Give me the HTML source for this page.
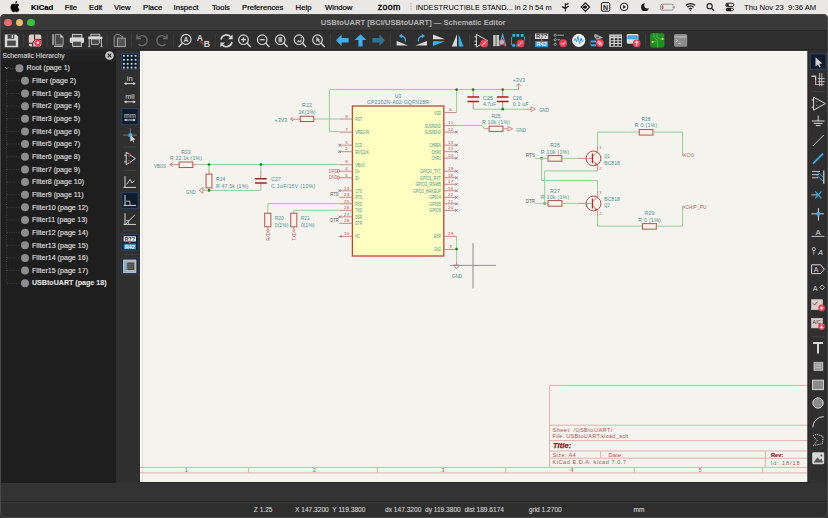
<!DOCTYPE html>
<html><head><meta charset="utf-8">
<style>
*{margin:0;padding:0;box-sizing:border-box}
html,body{width:828px;height:518px;overflow:hidden;background:linear-gradient(#e9e8e5 0,#e9e8e5 20px,#000 20px);font-family:"Liberation Sans",sans-serif;position:relative}
.a{position:absolute}
#menubar{left:0;top:0;width:828px;height:14px;background:#e9e8e5;color:#000;font-size:7.7px;-webkit-text-stroke:0.2px #000}
#menubar span{position:absolute;top:3.5px;line-height:8px;white-space:nowrap}
#winbg{left:0;top:14px;width:828px;height:504px;background:#333333;border-radius:5px}
#frame{left:0;top:14px;width:828px;height:504px;border:1px solid #4a4a4a;border-top-color:#444;border-radius:5px;pointer-events:none}
#cbot{left:140px;top:482px;width:668px;height:1px;background:#272727}
#title{left:0;top:14px;width:828px;height:15.5px;background:#393939;border-radius:5px 5px 0 0}
#tline{left:0;top:29.5px;width:828px;height:1.5px;background:#262626}
#tb{left:0;top:31px;width:828px;height:17.5px;background:#2f2f2f}
#tbl2{left:0;top:48.5px;width:828px;height:1.5px;background:#272727}
#panel{left:0;top:50px;width:116px;height:433px;background:#1e1e1e}
#phead{left:0;top:50px;width:116px;height:11px;background:#232323}
#ltb{left:116px;top:50px;width:24px;height:433px;background:#2f2f2f}
#canvas{left:140px;top:51px;width:668px;height:431px;background:#f4f3ee;border-left:1.5px solid #fbfbf9;border-top:1.5px solid #fbfbf9}
#cline{left:141.5px;top:52.5px;width:1px;height:429px;background:#e4e3de}
#rtb{left:808px;top:50px;width:20px;height:433px;background:#2f2f2f}
#sline{left:0;top:501px;width:828px;height:1px;background:#252525}
#status{left:0;top:502px;width:828px;height:16px;background:#2e2e2e;color:#d6d6d6;font-size:6.6px;-webkit-text-stroke:0.1px #d6d6d6;border-top:1px solid #363636}
#status span{position:absolute;top:3.4px;line-height:8px;white-space:nowrap}
.tl{width:7.5px;height:7.5px;border-radius:50%;top:18.6px}
#tree div{position:absolute;white-space:nowrap;color:#e2e2e2;font-size:7.1px;line-height:8px;-webkit-text-stroke:0.1px #e2e2e2}
</style></head><body>
<div id="menubar" class="a">
<svg class="a" style="left:0;top:0" width="828" height="14" viewBox="0 0 828 14"><path d="M17.2,7.4c0,-1.5 1.2,-2.2 1.3,-2.3c-0.7,-1 -1.8,-1.2 -2.2,-1.2c-0.9,-0.1 -1.8,0.5 -2.3,0.5c-0.5,0 -1.2,-0.5 -2,-0.5c-1,0 -2,0.6 -2.5,1.5c-1.1,1.9 -0.3,4.6 0.8,6.1c0.5,0.7 1.1,1.6 1.9,1.5c0.8,0 1.1,-0.5 2,-0.5c0.9,0 1.2,0.5 2,0.5c0.8,0 1.3,-0.8 1.8,-1.5c0.6,-0.8 0.8,-1.6 0.8,-1.7c0,0 -1.6,-0.6 -1.6,-2.4zM15.7,2.9c0.4,-0.5 0.7,-1.2 0.6,-1.9c-0.6,0 -1.3,0.4 -1.7,0.9c-0.4,0.4 -0.7,1.1 -0.6,1.8c0.7,0.1 1.3,-0.3 1.7,-0.8z" fill="#0a0a0a" transform="translate(2.2,0.2) scale(0.92)"/><path d="M411,3V11" stroke="#9a9a9a" stroke-width="1" stroke-dasharray="0.8 0.8"/><path d="M565.4,3.2V11.6M562,6.6L565.4,8.4L568.6,6M566.4,4.6L568.4,3.2" fill="none" stroke="#1c1c1c" stroke-width="1.3"/><path d="M585.4,2.8L589.6,7.1L585.4,11.4L581.2,7.1Z" fill="none" stroke="#1c1c1c" stroke-width="1.2"/><path d="M582.4,7.1L585.2,5.2L587.2,6.2L586.2,8.8L583.6,8.6Z" fill="#1c1c1c"/><rect x="601.4" y="2.6" width="8.4" height="8.6" rx="1.6" fill="none" stroke="#1c1c1c" stroke-width="1"/><text x="605.6" y="9.6" font-size="7" font-weight="bold" fill="#1c1c1c" text-anchor="middle">N</text><circle cx="624.1" cy="6.9" r="3.8" fill="none" stroke="#1c1c1c" stroke-width="1"/><path d="M623.1,5V8.8L626,6.9Z" fill="#1c1c1c"/><circle cx="645" cy="7.2" r="3.9" fill="#1c1c1c"/><circle cx="647.6" cy="5.2" r="3.3" fill="#e9e8e5"/><rect x="660.6" y="4.2" width="12.6" height="6" rx="1.6" fill="none" stroke="#8a8a8a" stroke-width="0.9"/><rect x="673.8" y="6.2" width="1" height="2" fill="#8a8a8a"/><rect x="661.8" y="5.3" width="1.6" height="3.8" fill="#e0466a"/><path d="M685.8,5.4A7,7 0 0 1 695.2,5.4M687.4,7.2A4.6,4.6 0 0 1 693.6,7.2M689,9A2.2,2.2 0 0 1 692,9" fill="none" stroke="#1c1c1c" stroke-width="1.2"/><circle cx="690.5" cy="10.4" r="0.8" fill="#1c1c1c"/><circle cx="709.6" cy="6.2" r="2.6" fill="none" stroke="#1c1c1c" stroke-width="1.1"/><path d="M711.5,8.1L714,10.6" stroke="#1c1c1c" stroke-width="1.2"/><rect x="725.8" y="3.2" width="8" height="3.4" rx="1.7" fill="none" stroke="#1c1c1c" stroke-width="1"/><circle cx="727.6" cy="4.9" r="1.3" fill="#1c1c1c"/><rect x="725.8" y="7.8" width="8" height="3.4" rx="1.7" fill="#1c1c1c"/><circle cx="732" cy="9.5" r="1.1" fill="#e9e8e5"/></svg>
<span style="left:31px;font-weight:bold">KiCad</span>
<span style="left:64.7px">File</span>
<span style="left:89px">Edit</span>
<span style="left:114px">View</span>
<span style="left:143px">Place</span>
<span style="left:173.6px">Inspect</span>
<span style="left:212px">Tools</span>
<span style="left:242px">Preferences</span>
<span style="left:295.6px">Help</span>
<span style="left:325px">Window</span>
<span style="left:377.8px;font-size:8.8px;top:2.6px;letter-spacing:0.3px;-webkit-text-stroke:0.3px #000">zoom</span>
<span style="left:415.8px;font-size:7.45px;-webkit-text-stroke:0 #000">INDESTRUCTIBLE STAND... in 2 h 54 m</span>
<span style="left:744px;-webkit-text-stroke:0 #000">Thu Nov 23&nbsp; 9:36 AM</span>
</div>
<div id="winbg" class="a"></div>
<div id="title" class="a"></div>
<div class="a tl" style="left:4.3px;background:#ee6a72"></div>
<div class="a tl" style="left:15.6px;background:#e8bf6c"></div>
<div class="a tl" style="left:27.2px;background:#3fc03c"></div>
<div class="a" style="left:320.8px;top:18.8px;font-size:7.6px;line-height:8px;font-weight:bold;color:#b4b4b4;white-space:nowrap">USBtoUART [BCI/USBtoUART] — Schematic Editor</div>
<div id="tline" class="a"></div>
<div id="tb" class="a"></div>
<div id="tbl2" class="a"></div>
<svg class="a" style="left:0;top:31px" width="828" height="19" viewBox="0 31 828 19" font-family="Liberation Sans, sans-serif"><rect x="22.9" y="34" width="1" height="13" fill="#3d3d3d"/>
<rect x="46.6" y="34" width="1" height="13" fill="#3d3d3d"/>
<rect x="106.5" y="34" width="1" height="13" fill="#3d3d3d"/>
<rect x="130.8" y="34" width="1" height="13" fill="#3d3d3d"/>
<rect x="172.8" y="34" width="1" height="13" fill="#3d3d3d"/>
<rect x="214.7" y="34" width="1" height="13" fill="#3d3d3d"/>
<rect x="330.1" y="34" width="1" height="13" fill="#3d3d3d"/>
<rect x="390.0" y="34" width="1" height="13" fill="#3d3d3d"/>
<rect x="469.1" y="34" width="1" height="13" fill="#3d3d3d"/>
<rect x="529.3" y="34" width="1" height="13" fill="#3d3d3d"/>
<rect x="645.0" y="34" width="1" height="13" fill="#3d3d3d"/>
<rect x="668.7" y="34" width="1" height="13" fill="#3d3d3d"/>
<path d="M4.8,34.4H16L18.2,36.6V47.2H4.8Z" fill="#d6d6d6"/>
<rect x="7.6" y="34.6" width="6.6" height="4.2" fill="#4a4a4a"/><rect x="11.6" y="35.2" width="1.4" height="2.8" fill="#d6d6d6"/>
<rect x="7.2" y="40.6" width="8.6" height="5.2" fill="#4a4a4a"/>
<rect x="28.8" y="34.4" width="12.5" height="12.2" rx="2" fill="#e3cbc8"/>
<path d="M34.6,34.4V39.6Q34.6,41 33.4,41.6Q32.4,42.4 32.8,46.6M28.8,43.2H32.6M35.4,39.4H41.3" fill="none" stroke="#1a1a1a" stroke-width="1"/>
<circle cx="37.9" cy="42.8" r="3.1" fill="#e8405a" stroke="#e8405a" stroke-width="1.4" stroke-dasharray="1.3 1.1"/><circle cx="37.9" cy="42.8" r="1.2" fill="#dff0ea"/>
<rect x="52.1" y="34.2" width="2" height="10.8" fill="#9a9a9a"/>
<path d="M55.3,34.4H60.6L63.2,37V44.8H55.3Z" fill="#4a4a4a" stroke="#a6a6a6" stroke-width="0.9"/>
<path d="M60.4,34.4L63.4,37.4H60.4Z" fill="#d8d8d8"/>
<rect x="54" y="45.7" width="9.2" height="1.3" fill="#b8b8b8"/>
<rect x="72.4" y="34.4" width="9.4" height="3.6" fill="#4a4a4a" stroke="#d6d6d6" stroke-width="0.9"/>
<rect x="69.8" y="37.4" width="14.2" height="5.6" rx="1.2" fill="#d6d6d6"/>
<path d="M72.6,41.2H81.4V46.4H72.6Z" fill="#4a4a4a" stroke="#d6d6d6" stroke-width="0.9"/>
<rect x="90.8" y="34.2" width="9" height="2.6" fill="#4a4a4a" stroke="#d6d6d6" stroke-width="0.8"/>
<rect x="88.2" y="36.6" width="14.2" height="2.4" fill="#d6d6d6"/>
<path d="M91.4,39H99.4V43.2L98,44.4H91.4Z" fill="#4a4a4a" stroke="#d6d6d6" stroke-width="0.8"/>
<path d="M89.2,39V46.4M101.4,39V46.4M88.2,46.6h2M100.4,46.6h2" stroke="#c0c0c0" stroke-width="1"/>
<path d="M114.2,36.2L116.2,34.4H119.4L121.2,36.2H122.6V46.6H114.2Z" fill="#3c3c3c" stroke="#9a9a9a" stroke-width="0.9"/>
<rect x="117.6" y="38.2" width="7.8" height="8.4" fill="#555" stroke="#a8a8a8" stroke-width="0.9"/>
<path d="M138.2,37.6A5,5 0 1 1 138.6,44.2" fill="none" stroke="#6e6e6e" stroke-width="1.3" transform="rotate(0)"/>
<path d="M137,34.6V38.6H141" fill="none" stroke="#6e6e6e" stroke-width="1.3"/>
<path d="M165.8,37.6A5,5 0 1 0 165.4,44.2" fill="none" stroke="#6e6e6e" stroke-width="1.3"/>
<path d="M167,34.6V38.6H163" fill="none" stroke="#6e6e6e" stroke-width="1.3"/>
<circle cx="186" cy="39.4" r="5" fill="none" stroke="#d6d6d6" stroke-width="1.2"/>
<path d="M182.4,43.2L178.6,47" stroke="#d6d6d6" stroke-width="1.4"/>
<text x="186" y="42" font-size="7" font-weight="bold" fill="#d6d6d6" text-anchor="middle">A</text>
<text x="199.8" y="40.6" font-size="8.6" font-weight="bold" fill="#d6d6d6" text-anchor="middle">A</text>
<text x="206.9" y="46.8" font-size="8.6" font-weight="bold" fill="#d6d6d6" text-anchor="middle">B</text>
<path d="M200,41.4L203.2,43.6" stroke="#e8405a" stroke-width="1.1"/><path d="M203.8,44.2l-2.4,0.1l1.3,-2z" fill="#e8405a"/>
<path d="M221,39.5A5.6,5.6 0 0 1 231,37.2" fill="none" stroke="#d6d6d6" stroke-width="1.6"/>
<path d="M232.6,34.4V39.2H228Z" fill="#d6d6d6"/>
<path d="M232,42A5.6,5.6 0 0 1 222,44.4" fill="none" stroke="#d6d6d6" stroke-width="1.6"/>
<path d="M220.4,47.2V42.4H225Z" fill="#d6d6d6"/>
<circle cx="243.5" cy="39.7" r="4.8" fill="none" stroke="#d6d6d6" stroke-width="1.2"/>
<path d="M246.9,43.1L250.7,46.9" stroke="#d6d6d6" stroke-width="1.4"/>
<path d="M241,39.7h5M243.5,37.2v5" stroke="#d6d6d6" stroke-width="1.3"/>
<circle cx="262.2" cy="39.7" r="4.8" fill="none" stroke="#d6d6d6" stroke-width="1.2"/>
<path d="M265.59999999999997,43.1L269.4,46.9" stroke="#d6d6d6" stroke-width="1.4"/>
<path d="M259.7,39.7h5" stroke="#d6d6d6" stroke-width="1.3"/>
<circle cx="280.3" cy="39.7" r="4.8" fill="none" stroke="#d6d6d6" stroke-width="1.2"/>
<path d="M283.7,43.1L287.5,46.9" stroke="#d6d6d6" stroke-width="1.4"/>
<rect x="278.4" y="37.2" width="3.8" height="5" fill="#b0b0b0"/>
<circle cx="299" cy="39.7" r="4.8" fill="none" stroke="#d6d6d6" stroke-width="1.2"/>
<path d="M302.4,43.1L306.2,46.9" stroke="#d6d6d6" stroke-width="1.4"/>
<path d="M296.4,42.2l2,-2.5l1.3,1.2l1.8,-2.2v3.5z" fill="#b0b0b0"/><circle cx="301.5" cy="37.6" r="0.8" fill="#b0b0b0"/>
<circle cx="317.5" cy="39.7" r="4.8" fill="none" stroke="#d6d6d6" stroke-width="1.2"/>
<path d="M320.9,43.1L324.7,46.9" stroke="#d6d6d6" stroke-width="1.4"/>
<path d="M316.3,36.6V42.2L317.7,40.8L319.2,42.8L320.2,42L318.8,40.3H320.6Z" fill="#c0c0c0"/>
<path d="M336,40.2L341.6,34.4V38H348.6V42.4H341.6V46Z" fill="#3daee9"/>
<path d="M360.5,34.2L366.4,40H362.6V46.6H358.4V40H354.6Z" fill="#3daee9"/>
<path d="M385,40.2L379.4,34.4V38H372.3V42.4H379.4V46Z" fill="#2e7396"/>
<path d="M396.6,41L396.6,45.6L408,45.6Z" fill="#d8d8d8"/>
<path d="M405.4,41.4A4.4,4.4 0 0 0 401,36" fill="none" stroke="#3daee9" stroke-width="1.4"/><path d="M398.8,36L402,33.8L402,38.2Z" fill="#3daee9"/>
<path d="M415.4,45.6L427,41L427,45.6Z" fill="#d8d8d8"/>
<path d="M418.4,41.4A4.4,4.4 0 0 1 422.8,36" fill="none" stroke="#3daee9" stroke-width="1.4"/><path d="M425,36L421.8,33.8L421.8,38.2Z" fill="#3daee9"/>
<path d="M433,34.4L445,39.2H433Z" fill="#d8d8d8"/><path d="M433,41.2H445L433,46Z" fill="#3daee9"/>
<path d="M457,34.2V46.6H451.8Z" fill="#d8d8d8"/><path d="M458.6,34.2V46.6H463.6Z" fill="#3daee9"/>
<path d="M476.4,34.4V47L487.6,40.7Z" fill="none" stroke="#d6d6d6" stroke-width="1"/>
<path d="M474.4,36.9H476.4M474.4,41.2H476.4M474.4,44.6H476.4" stroke="#d6d6d6" stroke-width="1"/>
<circle cx="484.2" cy="43.4" r="3.9" fill="#e8405a"/>
<path d="M482.2,45.4L486.2,41.4" stroke="#fff" stroke-width="1"/>
<rect x="493.2" y="35" width="2.5" height="11.2" fill="#c8c8c8"/><rect x="496.4" y="35" width="2.6" height="11.2" fill="#c8c8c8"/>
<path d="M499.6,46L502.6,34.8L505.8,46" fill="none" stroke="#3daee9" stroke-width="1.2"/>
<circle cx="501.9" cy="42.2" r="2.7" fill="#9abfc4" stroke="#e8405a" stroke-width="1"/><path d="M503.8,44.2L505.6,46.4" stroke="#e8405a" stroke-width="1.3"/>
<rect x="512.4" y="34" width="2.8" height="2.8" rx="0.6" fill="#3daee9"/>
<rect x="516.4" y="34" width="2.8" height="2.8" rx="0.6" fill="#3daee9"/>
<rect x="520.8000000000001" y="34" width="2.8" height="2.8" rx="0.6" fill="#3daee9"/>
<rect x="512.4" y="44" width="2.8" height="2.8" rx="0.6" fill="#3daee9"/>
<rect x="516.4" y="44" width="2.8" height="2.8" rx="0.6" fill="#3daee9"/>
<path d="M512.4,36.4Q511.6,36.6 511.6,38.2V40Q511.6,40.8 511,41Q511.6,41.2 511.6,42V44Q511.6,45.6 512.4,45.8M524.6,36.6V40.6" fill="none" stroke="#aaa" stroke-width="0.7"/>
<circle cx="520.7" cy="43.4" r="3.9" fill="#e8405a"/>
<path d="M518.7,45.4L522.7,41.4" stroke="#fff" stroke-width="1"/>
<rect x="535" y="33.6" width="13.2" height="5.4" fill="#d8d8d8"/><text x="541.6" y="38.4" font-size="5.4" fill="#333" text-anchor="middle" font-weight="bold" textLength="11" lengthAdjust="spacingAndGlyphs">R??</text>
<rect x="535" y="41" width="13.2" height="6.2" fill="#2f8fc4"/><text x="541.6" y="46.3" font-size="5.8" fill="#fff" text-anchor="middle" font-weight="bold" textLength="10.4" lengthAdjust="spacingAndGlyphs">R42</text>
<path d="M541.6,38.6v2.6" stroke="#e8405a" stroke-width="1"/><circle cx="541.6" cy="40.4" r="0.9" fill="#e8405a"/>
<circle cx="555.2" cy="35.2" r="1.1" fill="none" stroke="#c8c8c8" stroke-width="0.7"/>
<circle cx="555.2" cy="39.8" r="1.1" fill="none" stroke="#c8c8c8" stroke-width="0.7"/>
<circle cx="555.2" cy="44.3" r="1.1" fill="none" stroke="#c8c8c8" stroke-width="0.7"/>
<path d="M557.5,35.2H564M557.5,39.8H560" stroke="#c8c8c8" stroke-width="0.8"/>
<circle cx="563.2" cy="43.2" r="3.9" fill="#e8405a"/>
<path d="M561.2,43.2L562.7,44.8L565.4,41.8" fill="none" stroke="#fff" stroke-width="1"/>
<circle cx="578.7" cy="40.3" r="6.6" fill="#efefef"/>
<path d="M573.8,41L575.3,38.5L576.6,42L578,36.2L579.6,43.6L581,38L582.2,41.5L583.6,40.4" fill="none" stroke="#3a9ad0" stroke-width="1"/>
<path d="M595,34.2L602.4,37.6L596.6,39.4L594.4,36.4Z" fill="#9a9a9a" stroke="#c8c8c8" stroke-width="0.6"/><path d="M596.2,37.4L599,37.2" stroke="#333" stroke-width="0.7"/>
<rect x="590.8" y="40.5" width="5.4" height="1.9" fill="#3daee9"/>
<rect x="590.8" y="44.300000000000004" width="5.4" height="1.9" fill="#3daee9"/>
<path d="M590.2,41.4V45.2" stroke="#888" stroke-width="0.5"/>
<circle cx="599.8" cy="43.1" r="3.9" fill="#e8405a"/>
<circle cx="599" cy="42.3" r="1.2" fill="none" stroke="#fff" stroke-width="0.8"/><circle cx="600.7" cy="44" r="1.2" fill="none" stroke="#fff" stroke-width="0.8"/>
<rect x="609.2" y="34.4" width="12.8" height="12.4" fill="#cfcfcf"/>
<rect x="610.8000000000001" y="35.6" width="2.6" height="1.4" fill="#8a8a8a"/>
<rect x="610.8000000000001" y="38.3" width="2.6" height="1.9" fill="#2a2a2a"/>
<rect x="610.8000000000001" y="41.2" width="2.6" height="1.6" fill="#2a2a2a"/>
<rect x="610.8000000000001" y="44.1" width="2.6" height="1.8" fill="#2a2a2a"/>
<rect x="614.8000000000001" y="35.6" width="2.6" height="1.4" fill="#8a8a8a"/>
<rect x="614.8000000000001" y="38.3" width="2.6" height="1.9" fill="#2a2a2a"/>
<rect x="614.8000000000001" y="41.2" width="2.6" height="1.6" fill="#2a2a2a"/>
<rect x="614.8000000000001" y="44.1" width="2.6" height="1.8" fill="#2a2a2a"/>
<rect x="618.6" y="35.6" width="2.6" height="1.4" fill="#8a8a8a"/>
<rect x="618.6" y="38.3" width="2.6" height="1.9" fill="#2a2a2a"/>
<rect x="618.6" y="41.2" width="2.6" height="1.6" fill="#2a2a2a"/>
<rect x="618.6" y="44.1" width="2.6" height="1.8" fill="#2a2a2a"/>
<rect x="626.8" y="34" width="11.6" height="9.8" rx="1.2" fill="#dedede"/><rect x="627.6" y="35.4" width="10" height="3.8" fill="#3c9bd0"/><path d="M628.6,37.2h7.4" stroke="#a8d8f0" stroke-width="0.5"/>
<circle cx="636.7" cy="43.4" r="3.9" fill="#e8405a"/>
<path d="M636.7,45.8V41.2M634.9,42.8L636.7,41L638.5,42.8" fill="none" stroke="#fff" stroke-width="1"/>
<rect x="650.2" y="33.2" width="14.2" height="14.4" rx="1.8" fill="#1f8f1f"/>
<path d="M654,33.2V37.4L657.6,40.4V47.6M657,33.2V37L660.5,39.2H664.4M652,41.6H656.3" fill="none" stroke="#56bb56" stroke-width="0.9"/>
<circle cx="662.5" cy="38.8" r="1.1" fill="#f3d36b"/><circle cx="652.6" cy="42" r="1.1" fill="#f3d36b"/>
<rect x="674" y="34" width="13.2" height="12.8" rx="1.5" fill="#8c8c8c"/><rect x="674.6" y="36.4" width="12" height="1" fill="#c8c8c8"/>
<path d="M675.6,39L677.6,40.6L675.6,42.2" fill="none" stroke="#e0e0e0" stroke-width="0.8"/><path d="M678.4,43.4h2.4" stroke="#e0e0e0" stroke-width="0.8"/></svg>
<div id="panel" class="a"></div>
<div id="phead" class="a"></div>
<div id="tree">
<svg class="a" style="left:0;top:60px" width="116" height="240" viewBox="0 60 116 240">
<path d="M6.5,72V283" stroke="#4a4a4a" stroke-width="0.8" stroke-dasharray="1 1.2"/>
<path d="M5.2,67.2l1.6,1.6l1.6,-1.6" stroke="#9a9a9a" stroke-width="0.8" fill="none"/>
<path d="M10,68.4H15" stroke="#4a4a4a" stroke-width="0.8" stroke-dasharray="1 1.2"/>
<circle cx="19.4" cy="68.20" r="4" fill="#8c8c8c"/>
<path d="M7,80.85H20" stroke="#4a4a4a" stroke-width="0.8" stroke-dasharray="1 1.2"/>
<circle cx="25" cy="80.85" r="4" fill="#8c8c8c"/>
<path d="M7,93.50H20" stroke="#4a4a4a" stroke-width="0.8" stroke-dasharray="1 1.2"/>
<circle cx="25" cy="93.50" r="4" fill="#8c8c8c"/>
<path d="M7,106.15H20" stroke="#4a4a4a" stroke-width="0.8" stroke-dasharray="1 1.2"/>
<circle cx="25" cy="106.15" r="4" fill="#8c8c8c"/>
<path d="M7,118.80H20" stroke="#4a4a4a" stroke-width="0.8" stroke-dasharray="1 1.2"/>
<circle cx="25" cy="118.80" r="4" fill="#8c8c8c"/>
<path d="M7,131.45H20" stroke="#4a4a4a" stroke-width="0.8" stroke-dasharray="1 1.2"/>
<circle cx="25" cy="131.45" r="4" fill="#8c8c8c"/>
<path d="M7,144.10H20" stroke="#4a4a4a" stroke-width="0.8" stroke-dasharray="1 1.2"/>
<circle cx="25" cy="144.10" r="4" fill="#8c8c8c"/>
<path d="M7,156.75H20" stroke="#4a4a4a" stroke-width="0.8" stroke-dasharray="1 1.2"/>
<circle cx="25" cy="156.75" r="4" fill="#8c8c8c"/>
<path d="M7,169.40H20" stroke="#4a4a4a" stroke-width="0.8" stroke-dasharray="1 1.2"/>
<circle cx="25" cy="169.40" r="4" fill="#8c8c8c"/>
<path d="M7,182.05H20" stroke="#4a4a4a" stroke-width="0.8" stroke-dasharray="1 1.2"/>
<circle cx="25" cy="182.05" r="4" fill="#8c8c8c"/>
<path d="M7,194.70H20" stroke="#4a4a4a" stroke-width="0.8" stroke-dasharray="1 1.2"/>
<circle cx="25" cy="194.70" r="4" fill="#8c8c8c"/>
<path d="M7,207.35H20" stroke="#4a4a4a" stroke-width="0.8" stroke-dasharray="1 1.2"/>
<circle cx="25" cy="207.35" r="4" fill="#8c8c8c"/>
<path d="M7,220.00H20" stroke="#4a4a4a" stroke-width="0.8" stroke-dasharray="1 1.2"/>
<circle cx="25" cy="220.00" r="4" fill="#8c8c8c"/>
<path d="M7,232.65H20" stroke="#4a4a4a" stroke-width="0.8" stroke-dasharray="1 1.2"/>
<circle cx="25" cy="232.65" r="4" fill="#8c8c8c"/>
<path d="M7,245.30H20" stroke="#4a4a4a" stroke-width="0.8" stroke-dasharray="1 1.2"/>
<circle cx="25" cy="245.30" r="4" fill="#8c8c8c"/>
<path d="M7,257.95H20" stroke="#4a4a4a" stroke-width="0.8" stroke-dasharray="1 1.2"/>
<circle cx="25" cy="257.95" r="4" fill="#8c8c8c"/>
<path d="M7,270.60H20" stroke="#4a4a4a" stroke-width="0.8" stroke-dasharray="1 1.2"/>
<circle cx="25" cy="270.60" r="4" fill="#8c8c8c"/>
<path d="M7,283.25H20" stroke="#4a4a4a" stroke-width="0.8" stroke-dasharray="1 1.2"/>
<circle cx="25" cy="283.25" r="4" fill="#8c8c8c"/>
</svg>
<div style="left:2.4px;top:52.2px;font-size:6.75px;color:#d0d0d0">Schematic Hierarchy</div>
<svg class="a" style="left:104.1px;top:50.1px" width="11" height="11" viewBox="0 0 11 11"><circle cx="5.5" cy="5.5" r="4.3" fill="#c8c8c8"/><path d="M3.7,3.7L7.3,7.3M7.3,3.7L3.7,7.3" stroke="#1e1e1e" stroke-width="1.2"/></svg>
<div style="left:26.6px;top:64.40px">Root (page 1)</div>
<div style="left:32px;top:77.05px">Filter (page 2)</div>
<div style="left:32px;top:89.70px">Filter1 (page 3)</div>
<div style="left:32px;top:102.35px">Filter2 (page 4)</div>
<div style="left:32px;top:115.00px">Filter3 (page 5)</div>
<div style="left:32px;top:127.65px">Filter4 (page 6)</div>
<div style="left:32px;top:140.30px">Filter5 (page 7)</div>
<div style="left:32px;top:152.95px">Filter6 (page 8)</div>
<div style="left:32px;top:165.60px">Filter7 (page 9)</div>
<div style="left:32px;top:178.25px">Filter8 (page 10)</div>
<div style="left:32px;top:190.90px">Filter9 (page 11)</div>
<div style="left:32px;top:203.55px">Filter10 (page 12)</div>
<div style="left:32px;top:216.20px">Filter11 (page 13)</div>
<div style="left:32px;top:228.85px">Filter12 (page 14)</div>
<div style="left:32px;top:241.50px">Filter13 (page 15)</div>
<div style="left:32px;top:254.15px">Filter14 (page 16)</div>
<div style="left:32px;top:266.80px">Filter15 (page 17)</div>
<div style="left:32px;top:279.45px;font-weight:bold">USBtoUART (page 18)</div>
</div>
<div id="ltb" class="a"></div>
<div id="canvas" class="a"></div><div id="cline" class="a"></div>
<svg class="a" style="left:140px;top:51px" width="668" height="431" viewBox="140 51 668 431" font-family="Liberation Sans, sans-serif"><rect x="352.4" y="106" width="91.40000000000003" height="150" fill="#ffffc2" stroke="#b04a46" stroke-width="1.3"/>
<text x="398" y="97.66" font-size="5.2" fill="#4a9292" text-anchor="middle" font-weight="normal" font-style="normal" textLength="6.4" lengthAdjust="spacingAndGlyphs">U3</text>
<text x="398" y="104.46" font-size="5.2" fill="#4a9292" text-anchor="middle" font-weight="normal" font-style="normal" textLength="61.8" lengthAdjust="spacing">CP2102N-A02-GQFN28R</text>
<line x1="339.4" y1="119.07" x2="352.4" y2="119.07" stroke="#c87d7a" stroke-width="0.9"/>
<text x="346.6" y="117.85" font-size="4.4" fill="#a94a48" text-anchor="middle" font-weight="normal" font-style="normal" textLength="2.5" lengthAdjust="spacing">9</text>
<text x="355.2" y="121.02" font-size="4.6" fill="#4a9292" text-anchor="start" font-weight="normal" font-style="normal" textLength="6.8999999999999995" lengthAdjust="spacingAndGlyphs">RST</text>
<line x1="339.4" y1="132.11" x2="352.4" y2="132.11" stroke="#c87d7a" stroke-width="0.9"/>
<text x="346.6" y="130.89" font-size="4.4" fill="#a94a48" text-anchor="middle" font-weight="normal" font-style="normal" textLength="2.5" lengthAdjust="spacing">7</text>
<text x="355.2" y="134.06" font-size="4.6" fill="#4a9292" text-anchor="start" font-weight="normal" font-style="normal" textLength="13.799999999999999" lengthAdjust="spacingAndGlyphs">VREGIN</text>
<line x1="339.4" y1="145.15" x2="352.4" y2="145.15" stroke="#c87d7a" stroke-width="0.9"/>
<text x="346.6" y="143.93" font-size="4.4" fill="#a94a48" text-anchor="middle" font-weight="normal" font-style="normal" textLength="2.5" lengthAdjust="spacing">5</text>
<text x="355.2" y="147.10" font-size="4.6" fill="#4a9292" text-anchor="start" font-weight="normal" font-style="normal" textLength="6.8999999999999995" lengthAdjust="spacingAndGlyphs">DCD</text>
<path d="M338.25,143.8L340.95000000000005,146.5M338.25,146.5L340.95000000000005,143.8" stroke="#6a6a80" stroke-width="0.7"/>
<line x1="339.4" y1="151.67" x2="352.4" y2="151.67" stroke="#c87d7a" stroke-width="0.9"/>
<text x="346.6" y="150.45" font-size="4.4" fill="#a94a48" text-anchor="middle" font-weight="normal" font-style="normal" textLength="2.5" lengthAdjust="spacing">2</text>
<text x="355.2" y="153.62" font-size="4.6" fill="#4a9292" text-anchor="start" font-weight="normal" font-style="normal" textLength="13.799999999999999" lengthAdjust="spacingAndGlyphs">RI/CLK</text>
<path d="M338.25,150.32L340.95000000000005,153.01999999999998M338.25,153.01999999999998L340.95000000000005,150.32" stroke="#6a6a80" stroke-width="0.7"/>
<line x1="339.4" y1="164.71" x2="352.4" y2="164.71" stroke="#c87d7a" stroke-width="0.9"/>
<text x="346.6" y="163.49" font-size="4.4" fill="#a94a48" text-anchor="middle" font-weight="normal" font-style="normal" textLength="2.5" lengthAdjust="spacing">8</text>
<text x="355.2" y="166.66" font-size="4.6" fill="#4a9292" text-anchor="start" font-weight="normal" font-style="normal" textLength="9.2" lengthAdjust="spacingAndGlyphs">VBUS</text>
<line x1="339.4" y1="171.23" x2="352.4" y2="171.23" stroke="#c87d7a" stroke-width="0.9"/>
<text x="346.6" y="170.01" font-size="4.4" fill="#a94a48" text-anchor="middle" font-weight="normal" font-style="normal" textLength="2.5" lengthAdjust="spacing">4</text>
<text x="355.2" y="173.18" font-size="4.6" fill="#4a9292" text-anchor="start" font-weight="normal" font-style="normal" textLength="4.6" lengthAdjust="spacingAndGlyphs">D+</text>
<line x1="339.4" y1="177.75" x2="352.4" y2="177.75" stroke="#c87d7a" stroke-width="0.9"/>
<text x="346.6" y="176.53" font-size="4.4" fill="#a94a48" text-anchor="middle" font-weight="normal" font-style="normal" textLength="2.5" lengthAdjust="spacing">5</text>
<text x="355.2" y="179.70" font-size="4.6" fill="#4a9292" text-anchor="start" font-weight="normal" font-style="normal" textLength="4.6" lengthAdjust="spacingAndGlyphs">D-</text>
<line x1="339.4" y1="190.79" x2="352.4" y2="190.79" stroke="#c87d7a" stroke-width="0.9"/>
<text x="346.6" y="189.57" font-size="4.4" fill="#a94a48" text-anchor="middle" font-weight="normal" font-style="normal" textLength="5.0" lengthAdjust="spacing">23</text>
<text x="355.2" y="192.74" font-size="4.6" fill="#4a9292" text-anchor="start" font-weight="normal" font-style="normal" textLength="6.8999999999999995" lengthAdjust="spacingAndGlyphs">CTS</text>
<path d="M338.25,189.44L340.95000000000005,192.14M338.25,192.14L340.95000000000005,189.44" stroke="#6a6a80" stroke-width="0.7"/>
<line x1="339.4" y1="197.31" x2="352.4" y2="197.31" stroke="#c87d7a" stroke-width="0.9"/>
<text x="346.6" y="196.09" font-size="4.4" fill="#a94a48" text-anchor="middle" font-weight="normal" font-style="normal" textLength="5.0" lengthAdjust="spacing">24</text>
<text x="355.2" y="199.26" font-size="4.6" fill="#4a9292" text-anchor="start" font-weight="normal" font-style="normal" textLength="6.8999999999999995" lengthAdjust="spacingAndGlyphs">RTS</text>
<line x1="339.4" y1="203.83" x2="352.4" y2="203.83" stroke="#c87d7a" stroke-width="0.9"/>
<text x="346.6" y="202.61" font-size="4.4" fill="#a94a48" text-anchor="middle" font-weight="normal" font-style="normal" textLength="5.0" lengthAdjust="spacing">25</text>
<text x="355.2" y="205.78" font-size="4.6" fill="#4a9292" text-anchor="start" font-weight="normal" font-style="normal" textLength="6.8999999999999995" lengthAdjust="spacingAndGlyphs">RXD</text>
<line x1="339.4" y1="210.35" x2="352.4" y2="210.35" stroke="#c87d7a" stroke-width="0.9"/>
<text x="346.6" y="209.13" font-size="4.4" fill="#a94a48" text-anchor="middle" font-weight="normal" font-style="normal" textLength="5.0" lengthAdjust="spacing">26</text>
<text x="355.2" y="212.30" font-size="4.6" fill="#4a9292" text-anchor="start" font-weight="normal" font-style="normal" textLength="6.8999999999999995" lengthAdjust="spacingAndGlyphs">TXD</text>
<line x1="339.4" y1="216.87" x2="352.4" y2="216.87" stroke="#c87d7a" stroke-width="0.9"/>
<text x="346.6" y="215.65" font-size="4.4" fill="#a94a48" text-anchor="middle" font-weight="normal" font-style="normal" textLength="5.0" lengthAdjust="spacing">27</text>
<text x="355.2" y="218.82" font-size="4.6" fill="#4a9292" text-anchor="start" font-weight="normal" font-style="normal" textLength="6.8999999999999995" lengthAdjust="spacingAndGlyphs">DSR</text>
<path d="M338.25,215.52L340.95000000000005,218.22M338.25,218.22L340.95000000000005,215.52" stroke="#6a6a80" stroke-width="0.7"/>
<line x1="339.4" y1="223.39" x2="352.4" y2="223.39" stroke="#c87d7a" stroke-width="0.9"/>
<text x="346.6" y="222.17" font-size="4.4" fill="#a94a48" text-anchor="middle" font-weight="normal" font-style="normal" textLength="5.0" lengthAdjust="spacing">28</text>
<text x="355.2" y="225.34" font-size="4.6" fill="#4a9292" text-anchor="start" font-weight="normal" font-style="normal" textLength="6.8999999999999995" lengthAdjust="spacingAndGlyphs">DTR</text>
<line x1="339.4" y1="236.43" x2="352.4" y2="236.43" stroke="#c87d7a" stroke-width="0.9"/>
<text x="346.6" y="235.21" font-size="4.4" fill="#a94a48" text-anchor="middle" font-weight="normal" font-style="normal" textLength="5.0" lengthAdjust="spacing">10</text>
<text x="355.2" y="238.38" font-size="4.6" fill="#4a9292" text-anchor="start" font-weight="normal" font-style="normal" textLength="4.6" lengthAdjust="spacingAndGlyphs">NC</text>
<path d="M339.4,236.43l2.2,-1.2v2.4z" fill="#b04a46"/>
<line x1="443.8" y1="112.55" x2="456.6" y2="112.55" stroke="#c87d7a" stroke-width="0.9"/>
<text x="450.6" y="111.33" font-size="4.4" fill="#a94a48" text-anchor="middle" font-weight="normal" font-style="normal" textLength="2.5" lengthAdjust="spacing">6</text>
<text x="440.9" y="114.50" font-size="4.6" fill="#4a9292" text-anchor="end" font-weight="normal" font-style="normal" textLength="6.959999999999999" lengthAdjust="spacingAndGlyphs">VDD</text>
<line x1="443.8" y1="125.59" x2="456.6" y2="125.59" stroke="#c87d7a" stroke-width="0.9"/>
<text x="450.6" y="124.37" font-size="4.4" fill="#a94a48" text-anchor="middle" font-weight="normal" font-style="normal" textLength="5.0" lengthAdjust="spacing">11</text>
<text x="440.9" y="127.54" font-size="4.6" fill="#4a9292" text-anchor="end" font-weight="normal" font-style="normal" textLength="16.24" lengthAdjust="spacingAndGlyphs">SUSPEND</text>
<line x1="443.8" y1="132.11" x2="456.6" y2="132.11" stroke="#c87d7a" stroke-width="0.9"/>
<text x="450.6" y="130.89" font-size="4.4" fill="#a94a48" text-anchor="middle" font-weight="normal" font-style="normal" textLength="5.0" lengthAdjust="spacing">12</text>
<text x="440.9" y="134.06" font-size="4.6" fill="#4a9292" text-anchor="end" font-weight="normal" font-style="normal" textLength="16.24" lengthAdjust="spacingAndGlyphs">SUSPEND</text>
<path d="M455.25,130.76000000000002L457.95000000000005,133.46M455.25,133.46L457.95000000000005,130.76000000000002" stroke="#6a6a80" stroke-width="0.7"/>
<line x1="443.8" y1="145.15" x2="456.6" y2="145.15" stroke="#c87d7a" stroke-width="0.9"/>
<text x="450.6" y="143.93" font-size="4.4" fill="#a94a48" text-anchor="middle" font-weight="normal" font-style="normal" textLength="5.0" lengthAdjust="spacing">13</text>
<text x="440.9" y="147.10" font-size="4.6" fill="#4a9292" text-anchor="end" font-weight="normal" font-style="normal" textLength="11.6" lengthAdjust="spacingAndGlyphs">CHREN</text>
<path d="M455.25,143.8L457.95000000000005,146.5M455.25,146.5L457.95000000000005,143.8" stroke="#6a6a80" stroke-width="0.7"/>
<line x1="443.8" y1="151.67" x2="456.6" y2="151.67" stroke="#c87d7a" stroke-width="0.9"/>
<text x="450.6" y="150.45" font-size="4.4" fill="#a94a48" text-anchor="middle" font-weight="normal" font-style="normal" textLength="5.0" lengthAdjust="spacing">15</text>
<text x="440.9" y="153.62" font-size="4.6" fill="#4a9292" text-anchor="end" font-weight="normal" font-style="normal" textLength="9.28" lengthAdjust="spacingAndGlyphs">CHR0</text>
<path d="M455.25,150.32L457.95000000000005,153.01999999999998M455.25,153.01999999999998L457.95000000000005,150.32" stroke="#6a6a80" stroke-width="0.7"/>
<line x1="443.8" y1="158.19" x2="456.6" y2="158.19" stroke="#c87d7a" stroke-width="0.9"/>
<text x="450.6" y="156.97" font-size="4.4" fill="#a94a48" text-anchor="middle" font-weight="normal" font-style="normal" textLength="5.0" lengthAdjust="spacing">14</text>
<text x="440.9" y="160.14" font-size="4.6" fill="#4a9292" text-anchor="end" font-weight="normal" font-style="normal" textLength="9.28" lengthAdjust="spacingAndGlyphs">CHR1</text>
<path d="M455.25,156.84L457.95000000000005,159.54M455.25,159.54L457.95000000000005,156.84" stroke="#6a6a80" stroke-width="0.7"/>
<line x1="443.8" y1="171.23" x2="456.6" y2="171.23" stroke="#c87d7a" stroke-width="0.9"/>
<text x="450.6" y="170.01" font-size="4.4" fill="#a94a48" text-anchor="middle" font-weight="normal" font-style="normal" textLength="5.0" lengthAdjust="spacing">19</text>
<text x="440.9" y="173.18" font-size="4.6" fill="#4a9292" text-anchor="end" font-weight="normal" font-style="normal" textLength="20.88" lengthAdjust="spacingAndGlyphs">GPIO0_TXT</text>
<path d="M455.25,169.88L457.95000000000005,172.57999999999998M455.25,172.57999999999998L457.95000000000005,169.88" stroke="#6a6a80" stroke-width="0.7"/>
<line x1="443.8" y1="177.75" x2="456.6" y2="177.75" stroke="#c87d7a" stroke-width="0.9"/>
<text x="450.6" y="176.53" font-size="4.4" fill="#a94a48" text-anchor="middle" font-weight="normal" font-style="normal" textLength="5.0" lengthAdjust="spacing">18</text>
<text x="440.9" y="179.70" font-size="4.6" fill="#4a9292" text-anchor="end" font-weight="normal" font-style="normal" textLength="20.88" lengthAdjust="spacingAndGlyphs">GPIO1_RXT</text>
<path d="M455.25,176.4L457.95000000000005,179.1M455.25,179.1L457.95000000000005,176.4" stroke="#6a6a80" stroke-width="0.7"/>
<line x1="443.8" y1="184.27" x2="456.6" y2="184.27" stroke="#c87d7a" stroke-width="0.9"/>
<text x="450.6" y="183.05" font-size="4.4" fill="#a94a48" text-anchor="middle" font-weight="normal" font-style="normal" textLength="5.0" lengthAdjust="spacing">17</text>
<text x="440.9" y="186.22" font-size="4.6" fill="#4a9292" text-anchor="end" font-weight="normal" font-style="normal" textLength="25.52" lengthAdjust="spacingAndGlyphs">GPIO2_RS485</text>
<path d="M455.25,182.92000000000002L457.95000000000005,185.62M455.25,185.62L457.95000000000005,182.92000000000002" stroke="#6a6a80" stroke-width="0.7"/>
<line x1="443.8" y1="190.79" x2="456.6" y2="190.79" stroke="#c87d7a" stroke-width="0.9"/>
<text x="450.6" y="189.57" font-size="4.4" fill="#a94a48" text-anchor="middle" font-weight="normal" font-style="normal" textLength="5.0" lengthAdjust="spacing">16</text>
<text x="440.9" y="192.74" font-size="4.6" fill="#4a9292" text-anchor="end" font-weight="normal" font-style="normal" textLength="27.839999999999996" lengthAdjust="spacingAndGlyphs">GPIO3_WAKEUP</text>
<path d="M455.25,189.44L457.95000000000005,192.14M455.25,192.14L457.95000000000005,189.44" stroke="#6a6a80" stroke-width="0.7"/>
<line x1="443.8" y1="197.31" x2="456.6" y2="197.31" stroke="#c87d7a" stroke-width="0.9"/>
<text x="450.6" y="196.09" font-size="4.4" fill="#a94a48" text-anchor="middle" font-weight="normal" font-style="normal" textLength="5.0" lengthAdjust="spacing">22</text>
<text x="440.9" y="199.26" font-size="4.6" fill="#4a9292" text-anchor="end" font-weight="normal" font-style="normal" textLength="11.6" lengthAdjust="spacingAndGlyphs">GPIO4</text>
<path d="M455.25,195.96L457.95000000000005,198.66M455.25,198.66L457.95000000000005,195.96" stroke="#6a6a80" stroke-width="0.7"/>
<line x1="443.8" y1="203.83" x2="456.6" y2="203.83" stroke="#c87d7a" stroke-width="0.9"/>
<text x="450.6" y="202.61" font-size="4.4" fill="#a94a48" text-anchor="middle" font-weight="normal" font-style="normal" textLength="5.0" lengthAdjust="spacing">21</text>
<text x="440.9" y="205.78" font-size="4.6" fill="#4a9292" text-anchor="end" font-weight="normal" font-style="normal" textLength="11.6" lengthAdjust="spacingAndGlyphs">GPIO5</text>
<path d="M455.25,202.48000000000002L457.95000000000005,205.18M455.25,205.18L457.95000000000005,202.48000000000002" stroke="#6a6a80" stroke-width="0.7"/>
<line x1="443.8" y1="210.35" x2="456.6" y2="210.35" stroke="#c87d7a" stroke-width="0.9"/>
<text x="450.6" y="209.13" font-size="4.4" fill="#a94a48" text-anchor="middle" font-weight="normal" font-style="normal" textLength="5.0" lengthAdjust="spacing">20</text>
<text x="440.9" y="212.30" font-size="4.6" fill="#4a9292" text-anchor="end" font-weight="normal" font-style="normal" textLength="11.6" lengthAdjust="spacingAndGlyphs">GPIO6</text>
<path d="M455.25,209.0L457.95000000000005,211.7M455.25,211.7L457.95000000000005,209.0" stroke="#6a6a80" stroke-width="0.7"/>
<line x1="443.8" y1="236.43" x2="456.6" y2="236.43" stroke="#c87d7a" stroke-width="0.9"/>
<text x="450.6" y="235.21" font-size="4.4" fill="#a94a48" text-anchor="middle" font-weight="normal" font-style="normal" textLength="5.0" lengthAdjust="spacing">29</text>
<text x="440.9" y="238.38" font-size="4.6" fill="#4a9292" text-anchor="end" font-weight="normal" font-style="normal" textLength="6.959999999999999" lengthAdjust="spacingAndGlyphs">EXP</text>
<line x1="443.8" y1="249.47" x2="456.6" y2="249.47" stroke="#c87d7a" stroke-width="0.9"/>
<text x="450.6" y="248.25" font-size="4.4" fill="#a94a48" text-anchor="middle" font-weight="normal" font-style="normal" textLength="2.5" lengthAdjust="spacing">3</text>
<text x="440.9" y="251.42" font-size="4.6" fill="#4a9292" text-anchor="end" font-weight="normal" font-style="normal" textLength="6.959999999999999" lengthAdjust="spacingAndGlyphs">GND</text>
<line x1="329.4" y1="89.6" x2="518.6" y2="89.6" stroke="#98cc98" stroke-width="1"/>
<line x1="329.4" y1="89.6" x2="329.4" y2="131.6" stroke="#98cc98" stroke-width="1"/>
<line x1="329.4" y1="131.6" x2="339.4" y2="131.6" stroke="#98cc98" stroke-width="1"/>
<line x1="315.5" y1="119.0" x2="339.4" y2="119.0" stroke="#98cc98" stroke-width="1"/>
<line x1="456.6" y1="112.2" x2="456.6" y2="89.6" stroke="#98cc98" stroke-width="1"/>
<line x1="473.2" y1="89.6" x2="473.2" y2="97" stroke="#c87d7a" stroke-width="0.9"/>
<line x1="473.2" y1="101.4" x2="473.2" y2="109.2" stroke="#c87d7a" stroke-width="0.9"/>
<line x1="502.7" y1="89.6" x2="502.7" y2="97" stroke="#c87d7a" stroke-width="0.9"/>
<line x1="502.7" y1="101.4" x2="502.7" y2="109.2" stroke="#c87d7a" stroke-width="0.9"/>
<path d="M467.45,97H478.95M467.45,101.4H478.95" stroke="#9e2222" stroke-width="1.5"/>
<path d="M496.95,97H508.45M496.95,101.4H508.45" stroke="#9e2222" stroke-width="1.5"/>
<line x1="473.2" y1="109.2" x2="526" y2="109.2" stroke="#98cc98" stroke-width="1"/>
<line x1="518.6" y1="89.6" x2="518.6" y2="84" stroke="#c87d7a" stroke-width="0.9"/>
<polyline points="516.2,86.2 518.6,83.6 521.0,86.2" stroke="#c87d7a" stroke-width="0.9" fill="none"/>
<text x="519" y="81.96" font-size="5.2" fill="#4a9292" text-anchor="middle" font-weight="normal" font-style="normal" textLength="12.4" lengthAdjust="spacing">+3V3</text>
<line x1="526" y1="109.2" x2="531" y2="109.2" stroke="#c87d7a" stroke-width="0.9"/>
<polyline points="531,106.9 535.4,109.2 531,111.5 531,106.9" stroke="#c87d7a" stroke-width="0.9" fill="none"/>
<text x="539.2" y="112.36" font-size="5.2" fill="#4a9292" text-anchor="start" font-weight="normal" font-style="normal" textLength="9.6" lengthAdjust="spacingAndGlyphs">GND</text>
<text x="483" y="99.86" font-size="5.2" fill="#4a9292" text-anchor="start" font-weight="normal" font-style="normal" textLength="10" lengthAdjust="spacing">C25</text>
<text x="483" y="105.66" font-size="5.2" fill="#4a9292" text-anchor="start" font-weight="normal" font-style="normal" textLength="13" lengthAdjust="spacingAndGlyphs">4.7uF</text>
<text x="512.8" y="99.86" font-size="5.2" fill="#4a9292" text-anchor="start" font-weight="normal" font-style="normal" textLength="9" lengthAdjust="spacingAndGlyphs">C26</text>
<text x="512.8" y="105.66" font-size="5.2" fill="#4a9292" text-anchor="start" font-weight="normal" font-style="normal" textLength="15.6" lengthAdjust="spacing">0.1 uF</text>
<polyline points="456.6,125.5 482.4,125.5 484,128.7 486,128.7" stroke="#98cc98" stroke-width="1" fill="none"/>
<line x1="486" y1="128.7" x2="489.1" y2="128.7" stroke="#c87d7a" stroke-width="0.9"/>
<rect x="489.1" y="126.20000000000002" width="13.899999999999977" height="5.2" fill="none" stroke="#b04a46" stroke-width="0.95"/>
<line x1="503" y1="128.8" x2="508" y2="128.8" stroke="#c87d7a" stroke-width="0.9"/>
<polyline points="508,126.5 512.6,128.8 508,131.1 508,126.5" stroke="#c87d7a" stroke-width="0.9" fill="none"/>
<text x="516.2" y="132.16" font-size="5.2" fill="#4a9292" text-anchor="start" font-weight="normal" font-style="normal" textLength="9.6" lengthAdjust="spacingAndGlyphs">GND</text>
<text x="496" y="117.66" font-size="5.2" fill="#4a9292" text-anchor="middle" font-weight="normal" font-style="normal" textLength="9.2" lengthAdjust="spacingAndGlyphs">R25</text>
<text x="496" y="124.26" font-size="5.2" fill="#4a9292" text-anchor="middle" font-weight="normal" font-style="normal" textLength="28.1" lengthAdjust="spacing">R 10k (1%)</text>
<line x1="290.5" y1="119.2" x2="300.2" y2="119.2" stroke="#c87d7a" stroke-width="0.9"/>
<polyline points="293.2,117.3 290.5,119.2 293.2,121.1" stroke="#c87d7a" stroke-width="0.9" fill="none"/>
<rect x="300.2" y="116.25" width="13.600000000000023" height="5.3" fill="none" stroke="#b04a46" stroke-width="0.95"/>
<line x1="313.8" y1="119.0" x2="315.5" y2="119.0" stroke="#c87d7a" stroke-width="0.9"/>
<text x="274.6" y="122.16" font-size="5.2" fill="#4a9292" text-anchor="start" font-weight="normal" font-style="normal" textLength="12.6" lengthAdjust="spacing">+3V3</text>
<text x="307" y="107.36" font-size="5.2" fill="#4a9292" text-anchor="middle" font-weight="normal" font-style="normal" textLength="9.8" lengthAdjust="spacing">R22</text>
<text x="307" y="114.16" font-size="5.2" fill="#4a9292" text-anchor="middle" font-weight="normal" font-style="normal" textLength="16.9" lengthAdjust="spacingAndGlyphs">1K(1%)</text>
<line x1="169.8" y1="164.6" x2="179.1" y2="164.6" stroke="#c87d7a" stroke-width="0.9"/>
<polyline points="172.8,162.6 169.8,164.6 172.8,166.6" stroke="#c87d7a" stroke-width="0.9" fill="none"/>
<rect x="179.1" y="162.05" width="13.700000000000017" height="5.5" fill="none" stroke="#b04a46" stroke-width="0.95"/>
<line x1="192.8" y1="164.6" x2="196.1" y2="164.6" stroke="#c87d7a" stroke-width="0.9"/>
<line x1="196.1" y1="164.5" x2="339.4" y2="164.5" stroke="#98cc98" stroke-width="1"/>
<text x="153.9" y="167.96" font-size="5.2" fill="#4a9292" text-anchor="start" font-weight="normal" font-style="normal" textLength="12.2" lengthAdjust="spacingAndGlyphs">VBUS</text>
<text x="186" y="153.66" font-size="5.2" fill="#4a9292" text-anchor="middle" font-weight="normal" font-style="normal" textLength="9.3" lengthAdjust="spacingAndGlyphs">R23</text>
<text x="186" y="159.66" font-size="5.2" fill="#4a9292" text-anchor="middle" font-weight="normal" font-style="normal" textLength="32.2" lengthAdjust="spacing">R 22.1k (1%)</text>
<line x1="209" y1="164.5" x2="209" y2="170" stroke="#98cc98" stroke-width="1"/>
<line x1="209" y1="170" x2="209" y2="174.1" stroke="#c87d7a" stroke-width="0.9"/>
<rect x="206.05" y="174.1" width="5.9" height="13.800000000000011" fill="none" stroke="#b04a46" stroke-width="0.95"/>
<line x1="209" y1="187.9" x2="209" y2="190.4" stroke="#c87d7a" stroke-width="0.9"/>
<line x1="202.9" y1="190.4" x2="260.9" y2="190.4" stroke="#98cc98" stroke-width="1"/>
<polyline points="202.9,187.6 199.1,190.4 202.9,193.4 202.9,187.6" stroke="#c87d7a" stroke-width="0.9" fill="none"/>
<text x="186" y="194.26" font-size="5.2" fill="#4a9292" text-anchor="start" font-weight="normal" font-style="normal" textLength="9.7" lengthAdjust="spacingAndGlyphs">GND</text>
<text x="216" y="181.26" font-size="5.2" fill="#4a9292" text-anchor="start" font-weight="normal" font-style="normal" textLength="9.4" lengthAdjust="spacingAndGlyphs">R24</text>
<text x="216" y="187.56" font-size="5.2" fill="#4a9292" text-anchor="start" font-weight="normal" font-style="normal" textLength="32.2" lengthAdjust="spacing">R 47.5k (1%)</text>
<line x1="260.9" y1="164.5" x2="260.9" y2="171" stroke="#98cc98" stroke-width="1"/>
<line x1="260.9" y1="171" x2="260.9" y2="178.8" stroke="#c87d7a" stroke-width="0.9"/>
<line x1="260.9" y1="183" x2="260.9" y2="186" stroke="#c87d7a" stroke-width="0.9"/>
<line x1="260.9" y1="186" x2="260.9" y2="190.4" stroke="#98cc98" stroke-width="1"/>
<path d="M255.04999999999998,178.8H266.75M255.04999999999998,183H266.75" stroke="#9e2222" stroke-width="1.5"/>
<text x="271.1" y="181.06" font-size="5.2" fill="#4a9292" text-anchor="start" font-weight="normal" font-style="normal" textLength="9.7" lengthAdjust="spacing">C27</text>
<text x="271.1" y="187.66" font-size="5.2" fill="#4a9292" text-anchor="start" font-weight="normal" font-style="normal" textLength="44.1" lengthAdjust="spacing">C 1uF/16V (10%)</text>
<text x="329.1" y="172.96" font-size="5.2" fill="#b86a68" text-anchor="start" font-weight="normal" font-style="normal" textLength="8.2" lengthAdjust="spacingAndGlyphs">DPD</text>
<path d="M337.6,169.5h0.6a1.6,1.6 0 0 1 0,3.2h-0.6z" fill="none" stroke="#b86a68" stroke-width="0.7"/>
<text x="329.1" y="179.46" font-size="5.2" fill="#b86a68" text-anchor="start" font-weight="normal" font-style="normal" textLength="8.2" lengthAdjust="spacingAndGlyphs">DND</text>
<path d="M337.6,176.0h0.6a1.6,1.6 0 0 1 0,3.2h-0.6z" fill="none" stroke="#b86a68" stroke-width="0.7"/>
<text x="330.3" y="195.76" font-size="5.2" fill="#555" text-anchor="start" font-weight="normal" font-style="normal" textLength="8.3" lengthAdjust="spacingAndGlyphs">RTS</text>
<text x="330.3" y="222.26" font-size="5.2" fill="#555" text-anchor="start" font-weight="normal" font-style="normal" textLength="8.3" lengthAdjust="spacingAndGlyphs">DTR</text>
<polyline points="267.9,213.2 267.9,203.6 339.4,203.6" stroke="#98cc98" stroke-width="1" fill="none"/>
<polyline points="293.8,213.2 293.8,210.3 339.4,210.3" stroke="#98cc98" stroke-width="1" fill="none"/>
<rect x="264.75" y="213.2" width="6.1" height="13.600000000000023" fill="none" stroke="#b04a46" stroke-width="0.95"/>
<rect x="290.75" y="213.2" width="6.1" height="13.600000000000023" fill="none" stroke="#b04a46" stroke-width="0.95"/>
<line x1="267.8" y1="226.8" x2="267.8" y2="229.5" stroke="#c87d7a" stroke-width="0.9"/>
<line x1="293.8" y1="226.8" x2="293.8" y2="229.5" stroke="#c87d7a" stroke-width="0.9"/>
<circle cx="267.8" cy="230.6" r="1.0" fill="none" stroke="#b86a68" stroke-width="0.7"/>
<text x="0" y="0" font-size="5.2" fill="#b86a68" text-anchor="start" textLength="8.4" lengthAdjust="spacingAndGlyphs" transform="translate(269.7,232) rotate(-90) translate(-8.6,0)">RXD</text>
<circle cx="293.8" cy="230.6" r="1.0" fill="none" stroke="#b86a68" stroke-width="0.7"/>
<text x="0" y="0" font-size="5.2" fill="#b86a68" text-anchor="start" textLength="8.4" lengthAdjust="spacingAndGlyphs" transform="translate(295.7,232) rotate(-90) translate(-8.6,0)">TXD</text>
<text x="274.8" y="220.26" font-size="5.2" fill="#4a9292" text-anchor="start" font-weight="normal" font-style="normal" textLength="9.0" lengthAdjust="spacingAndGlyphs">R20</text>
<text x="274.8" y="226.86" font-size="5.2" fill="#4a9292" text-anchor="start" font-weight="normal" font-style="normal" textLength="13.6" lengthAdjust="spacingAndGlyphs">0(1%)</text>
<text x="300.7" y="220.26" font-size="5.2" fill="#4a9292" text-anchor="start" font-weight="normal" font-style="normal" textLength="9.0" lengthAdjust="spacingAndGlyphs">R21</text>
<text x="300.7" y="226.86" font-size="5.2" fill="#4a9292" text-anchor="start" font-weight="normal" font-style="normal" textLength="13.9" lengthAdjust="spacing">0(1%)</text>
<line x1="456.6" y1="236" x2="456.6" y2="249.1" stroke="#98cc98" stroke-width="1"/>
<line x1="456.6" y1="249.1" x2="456.6" y2="262" stroke="#98cc98" stroke-width="1"/>
<line x1="456.6" y1="262" x2="456.6" y2="265" stroke="#c87d7a" stroke-width="0.9"/>
<polyline points="453.8,265 459.4,265 456.6,269 453.8,265" stroke="#c87d7a" stroke-width="0.9" fill="none"/>
<text x="457" y="277.66" font-size="5.2" fill="#4a9292" text-anchor="middle" font-weight="normal" font-style="normal" textLength="10" lengthAdjust="spacingAndGlyphs">GND</text>
<circle cx="456.6" cy="89.6" r="1.35" fill="#0a8a0a"/>
<circle cx="473.2" cy="89.6" r="1.35" fill="#0a8a0a"/>
<circle cx="502.7" cy="89.6" r="1.35" fill="#0a8a0a"/>
<circle cx="502.7" cy="109.2" r="1.35" fill="#0a8a0a"/>
<circle cx="209" cy="164.5" r="1.35" fill="#0a8a0a"/>
<circle cx="260.9" cy="164.5" r="1.35" fill="#0a8a0a"/>
<circle cx="209" cy="190.4" r="1.35" fill="#0a8a0a"/>
<circle cx="456.6" cy="249.1" r="1.35" fill="#0a8a0a"/>
<circle cx="541.6" cy="158.4" r="1.35" fill="#0a8a0a"/>
<circle cx="544.7" cy="203.4" r="1.35" fill="#0a8a0a"/>
<text x="525.8" y="156.86" font-size="5.2" fill="#555" text-anchor="start" font-weight="normal" font-style="normal" textLength="9.2" lengthAdjust="spacingAndGlyphs">RTS</text>
<text x="525.8" y="202.66" font-size="5.2" fill="#555" text-anchor="start" font-weight="normal" font-style="normal" textLength="9.2" lengthAdjust="spacingAndGlyphs">DTR</text>
<line x1="535" y1="158.4" x2="548" y2="158.4" stroke="#98cc98" stroke-width="1"/>
<rect x="548" y="155.6" width="13.899999999999977" height="5.6" fill="none" stroke="#b04a46" stroke-width="0.95"/>
<line x1="561.9" y1="158.4" x2="578" y2="158.4" stroke="#98cc98" stroke-width="1"/>
<line x1="578" y1="158.4" x2="585.6" y2="158.4" stroke="#c87d7a" stroke-width="0.9"/>
<polyline points="541.6,158.4 541.6,180.6 597.6,180.6 597.6,191" stroke="#98cc98" stroke-width="1" fill="none"/>
<polyline points="597.6,170.9 544.7,170.9 544.7,203.4" stroke="#98cc98" stroke-width="1" fill="none"/>
<line x1="535" y1="203.4" x2="548" y2="203.4" stroke="#98cc98" stroke-width="1"/>
<rect x="548" y="200.6" width="14" height="5.6" fill="none" stroke="#b04a46" stroke-width="0.95"/>
<line x1="562" y1="203.4" x2="578" y2="203.4" stroke="#98cc98" stroke-width="1"/>
<line x1="578" y1="203.4" x2="585.6" y2="203.4" stroke="#c87d7a" stroke-width="0.9"/>
<text x="555" y="146.86" font-size="5.2" fill="#4a9292" text-anchor="middle" font-weight="normal" font-style="normal" textLength="9.6" lengthAdjust="spacing">R26</text>
<text x="555" y="153.66" font-size="5.2" fill="#4a9292" text-anchor="middle" font-weight="normal" font-style="normal" textLength="28.4" lengthAdjust="spacing">R 10k (1%)</text>
<text x="555" y="192.66" font-size="5.2" fill="#4a9292" text-anchor="middle" font-weight="normal" font-style="normal" textLength="9.6" lengthAdjust="spacing">R27</text>
<text x="555" y="199.46" font-size="5.2" fill="#4a9292" text-anchor="middle" font-weight="normal" font-style="normal" textLength="28.4" lengthAdjust="spacing">R 10k (1%)</text>
<circle cx="593.5" cy="158.4" r="7.4" fill="none" stroke="#b04a46" stroke-width="1.0"/>
<line x1="592.5" y1="153.4" x2="592.5" y2="163.4" stroke="#a83030" stroke-width="1.4"/>
<line x1="585.6" y1="158.4" x2="591.9" y2="158.4" stroke="#c87d7a" stroke-width="0.8"/>
<path d="M593.1,156.20000000000002L597.6,151.6M593.1,160.6L597.6,165.20000000000002" stroke="#b04a46" stroke-width="0.7" fill="none"/>
<path d="M597.2,165.0 l-2.6,-0.4 l1.2,-1.8z" fill="#b04a46"/>
<line x1="597.6" y1="151.6" x2="597.6" y2="145.9" stroke="#c87d7a" stroke-width="0.9"/>
<line x1="597.6" y1="165.20000000000002" x2="597.6" y2="170.9" stroke="#c87d7a" stroke-width="0.9"/>
<text x="599.6" y="148.75" font-size="3.2" fill="#a94a48" text-anchor="start" font-weight="normal" font-style="normal">3</text>
<text x="599.6" y="170.35" font-size="3.2" fill="#a94a48" text-anchor="start" font-weight="normal" font-style="normal">2</text>
<text x="585.6" y="162.35" font-size="3.2" fill="#a94a48" text-anchor="start" font-weight="normal" font-style="normal">1</text>
<circle cx="593.5" cy="203.5" r="7.4" fill="none" stroke="#b04a46" stroke-width="1.0"/>
<line x1="592.5" y1="198.5" x2="592.5" y2="208.5" stroke="#a83030" stroke-width="1.4"/>
<line x1="585.6" y1="203.5" x2="591.9" y2="203.5" stroke="#c87d7a" stroke-width="0.8"/>
<path d="M593.1,201.3L597.6,196.7M593.1,205.7L597.6,210.3" stroke="#b04a46" stroke-width="0.7" fill="none"/>
<path d="M597.2,210.1 l-2.6,-0.4 l1.2,-1.8z" fill="#b04a46"/>
<line x1="597.6" y1="196.7" x2="597.6" y2="191.0" stroke="#c87d7a" stroke-width="0.9"/>
<line x1="597.6" y1="210.3" x2="597.6" y2="216.0" stroke="#c87d7a" stroke-width="0.9"/>
<text x="599.6" y="193.85" font-size="3.2" fill="#a94a48" text-anchor="start" font-weight="normal" font-style="normal">3</text>
<text x="599.6" y="215.45" font-size="3.2" fill="#a94a48" text-anchor="start" font-weight="normal" font-style="normal">2</text>
<text x="585.6" y="207.45" font-size="3.2" fill="#a94a48" text-anchor="start" font-weight="normal" font-style="normal">1</text>
<text x="604.3" y="158.06" font-size="5.2" fill="#4a9292" text-anchor="start" font-weight="normal" font-style="normal" textLength="5.4" lengthAdjust="spacingAndGlyphs">Q1</text>
<text x="604.3" y="164.96" font-size="5.2" fill="#4a9292" text-anchor="start" font-weight="normal" font-style="normal" textLength="15.5" lengthAdjust="spacingAndGlyphs">BC818</text>
<text x="604.3" y="200.86" font-size="5.2" fill="#4a9292" text-anchor="start" font-weight="normal" font-style="normal" textLength="15.5" lengthAdjust="spacingAndGlyphs">BC818</text>
<text x="604.3" y="207.46" font-size="5.2" fill="#4a9292" text-anchor="start" font-weight="normal" font-style="normal" textLength="5.4" lengthAdjust="spacingAndGlyphs">Q2</text>
<polyline points="597.6,146 597.6,132.1 639.2,132.1" stroke="#98cc98" stroke-width="1" fill="none"/>
<rect x="639.2" y="129.55" width="13.799999999999955" height="5.5" fill="none" stroke="#b04a46" stroke-width="0.95"/>
<polyline points="653,132.1 682.6,132.1 682.6,154.2" stroke="#98cc98" stroke-width="1" fill="none"/>
<text x="646" y="120.66" font-size="5.2" fill="#4a9292" text-anchor="middle" font-weight="normal" font-style="normal" textLength="8.8" lengthAdjust="spacingAndGlyphs">R28</text>
<text x="646" y="127.46" font-size="5.2" fill="#4a9292" text-anchor="middle" font-weight="normal" font-style="normal" textLength="22.5" lengthAdjust="spacing">R 0 (1%)</text>
<polyline points="597.6,214.7 597.6,226.2 642.5,226.2" stroke="#98cc98" stroke-width="1" fill="none"/>
<rect x="642.5" y="223.65" width="13.799999999999955" height="5.5" fill="none" stroke="#b04a46" stroke-width="0.95"/>
<polyline points="656.3,226.2 682.6,226.2 682.6,207.6" stroke="#98cc98" stroke-width="1" fill="none"/>
<text x="649.5" y="215.26" font-size="5.2" fill="#4a9292" text-anchor="middle" font-weight="normal" font-style="normal" textLength="9.6" lengthAdjust="spacing">R29</text>
<text x="649.5" y="221.86" font-size="5.2" fill="#4a9292" text-anchor="middle" font-weight="normal" font-style="normal" textLength="22.6" lengthAdjust="spacing">R 0 (1%)</text>
<circle cx="683.6" cy="155" r="1.0" fill="none" stroke="#b86a68" stroke-width="0.7"/>
<text x="685" y="156.86" font-size="5.2" fill="#b86a68" text-anchor="start" font-weight="normal" font-style="normal" textLength="8.8" lengthAdjust="spacing">IO0</text>
<circle cx="683.6" cy="207.1" r="1.0" fill="none" stroke="#b86a68" stroke-width="0.7"/>
<text x="685" y="208.96" font-size="5.2" fill="#b86a68" text-anchor="start" font-weight="normal" font-style="normal" textLength="21.7" lengthAdjust="spacingAndGlyphs">CHIP_PU</text>
<line x1="473" y1="243" x2="473" y2="288.5" stroke="#8e8e94" stroke-width="1"/>
<line x1="450" y1="265.4" x2="496" y2="265.4" stroke="#8e8e94" stroke-width="1"/>
<line x1="140" y1="467.4" x2="808" y2="467.4" stroke="#dfb0ad" stroke-width="1"/>
<line x1="140" y1="472.9" x2="808" y2="472.9" stroke="#dfb0ad" stroke-width="1"/>
<line x1="248.7" y1="467.4" x2="248.7" y2="472.9" stroke="#dfb0ad" stroke-width="1"/>
<line x1="377.4" y1="467.4" x2="377.4" y2="472.9" stroke="#dfb0ad" stroke-width="1"/>
<line x1="505.8" y1="467.4" x2="505.8" y2="472.9" stroke="#dfb0ad" stroke-width="1"/>
<line x1="634.2" y1="467.4" x2="634.2" y2="472.9" stroke="#dfb0ad" stroke-width="1"/>
<line x1="762.6" y1="467.4" x2="762.6" y2="472.9" stroke="#dfb0ad" stroke-width="1"/>
<text x="186.4" y="471.96" font-size="5.2" fill="#b0524d" text-anchor="middle" font-weight="normal" font-style="normal">1</text>
<text x="314.4" y="471.96" font-size="5.2" fill="#b0524d" text-anchor="middle" font-weight="normal" font-style="normal">2</text>
<text x="443" y="471.96" font-size="5.2" fill="#b0524d" text-anchor="middle" font-weight="normal" font-style="normal">3</text>
<text x="571.9" y="471.96" font-size="5.2" fill="#b0524d" text-anchor="middle" font-weight="normal" font-style="normal">4</text>
<text x="700.3" y="471.96" font-size="5.2" fill="#b0524d" text-anchor="middle" font-weight="normal" font-style="normal">5</text>
<line x1="549.6" y1="385.4" x2="549.6" y2="467.4" stroke="#dfb0ad" stroke-width="1"/>
<line x1="549.6" y1="385.4" x2="808" y2="385.4" stroke="#dfb0ad" stroke-width="1"/>
<line x1="549.6" y1="425.2" x2="808" y2="425.2" stroke="#dfb0ad" stroke-width="1"/>
<line x1="549.6" y1="440.6" x2="808" y2="440.6" stroke="#dfb0ad" stroke-width="1"/>
<line x1="549.6" y1="451" x2="808" y2="451" stroke="#dfb0ad" stroke-width="1"/>
<line x1="549.6" y1="458.2" x2="808" y2="458.2" stroke="#dfb0ad" stroke-width="1"/>
<line x1="600.6" y1="451" x2="600.6" y2="458.2" stroke="#dfb0ad" stroke-width="1"/>
<line x1="765.3" y1="451" x2="765.3" y2="467.4" stroke="#dfb0ad" stroke-width="1"/>
<text x="552.5" y="431.50" font-size="5.6" fill="#b0524d" text-anchor="start" font-weight="normal" font-style="normal" textLength="59.9" lengthAdjust="spacing">Sheet: /USBtoUART/</text>
<text x="552.5" y="438.20" font-size="5.6" fill="#b0524d" text-anchor="start" font-weight="normal" font-style="normal" textLength="75.9" lengthAdjust="spacing">File: USBtoUART.kicad_sch</text>
<text x="553" y="448.15" font-size="7.4" fill="#8a1414" text-anchor="start" font-weight="bold" font-style="italic" textLength="18.3" lengthAdjust="spacing" stroke="#8a1414" stroke-width="0.25">Title:</text>
<text x="552.5" y="456.70" font-size="5.6" fill="#b0524d" text-anchor="start" font-weight="normal" font-style="normal" textLength="23.2" lengthAdjust="spacing">Size: A4</text>
<text x="608.5" y="456.70" font-size="5.6" fill="#b0524d" text-anchor="start" font-weight="normal" font-style="normal" textLength="14.5" lengthAdjust="spacing">Date:</text>
<text x="552.5" y="464.20" font-size="5.6" fill="#b0524d" text-anchor="start" font-weight="normal" font-style="normal" textLength="73.5" lengthAdjust="spacing">KiCad E.D.A.  kicad 7.0.7</text>
<text x="771" y="457.08" font-size="5.8" fill="#8a1414" text-anchor="start" font-weight="bold" font-style="normal" textLength="12.3" lengthAdjust="spacingAndGlyphs" stroke="#8a1414" stroke-width="0.15">Rev:</text>
<text x="770.7" y="464.60" font-size="5.6" fill="#b0524d" text-anchor="start" font-weight="normal" font-style="normal" textLength="29" lengthAdjust="spacing">Id: 18/18</text></svg>
<div id="rtb" class="a"></div>
<svg class="a" style="left:0;top:0" width="828" height="518" viewBox="0 0 828 518" font-family="Liberation Sans, sans-serif"><rect x="121.7" y="53.4" width="16.4" height="15.8" fill="#0f1b2b" stroke="#2b4566" stroke-width="1"/>
<rect x="123.0" y="54.9" width="1.8" height="1.8" fill="#d8d8d8"/>
<rect x="123.0" y="58.9" width="1.8" height="1.8" fill="#d8d8d8"/>
<rect x="123.0" y="62.9" width="1.8" height="1.8" fill="#d8d8d8"/>
<rect x="123.0" y="66.69999999999999" width="1.8" height="1.8" fill="#d8d8d8"/>
<rect x="126.8" y="54.9" width="1.8" height="1.8" fill="#d8d8d8"/>
<rect x="126.8" y="58.9" width="1.8" height="1.8" fill="#d8d8d8"/>
<rect x="126.8" y="62.9" width="1.8" height="1.8" fill="#d8d8d8"/>
<rect x="126.8" y="66.69999999999999" width="1.8" height="1.8" fill="#d8d8d8"/>
<rect x="130.7" y="54.9" width="1.8" height="1.8" fill="#d8d8d8"/>
<rect x="130.7" y="58.9" width="1.8" height="1.8" fill="#d8d8d8"/>
<rect x="130.7" y="62.9" width="1.8" height="1.8" fill="#d8d8d8"/>
<rect x="130.7" y="66.69999999999999" width="1.8" height="1.8" fill="#d8d8d8"/>
<rect x="134.7" y="54.9" width="1.8" height="1.8" fill="#d8d8d8"/>
<rect x="134.7" y="58.9" width="1.8" height="1.8" fill="#d8d8d8"/>
<rect x="134.7" y="62.9" width="1.8" height="1.8" fill="#d8d8d8"/>
<rect x="134.7" y="66.69999999999999" width="1.8" height="1.8" fill="#d8d8d8"/>
<text x="129.8" y="81.4" font-size="7.6" fill="#d8d8d8" text-anchor="middle">in</text>
<path d="M124.6,83.6H135.2" stroke="#d8d8d8" stroke-width="1"/><path d="M124.1,83.6l2.4,-1.6v3.2z M135.7,83.6l-2.4,-1.6v3.2z" fill="#d8d8d8"/>
<text x="129.9" y="99.4" font-size="7" fill="#d8d8d8" text-anchor="middle" textLength="9.4" lengthAdjust="spacingAndGlyphs">mil</text>
<path d="M124.6,101.8H135.2" stroke="#d8d8d8" stroke-width="1"/><path d="M124.1,101.8l2.4,-1.6v3.2z M135.7,101.8l-2.4,-1.6v3.2z" fill="#d8d8d8"/>
<rect x="121.8" y="108.6" width="16.3" height="16" fill="#0f1b2b" stroke="#2b4566" stroke-width="1"/>
<text x="129.9" y="117.8" font-size="7" fill="#d8d8d8" text-anchor="middle" textLength="11.6" lengthAdjust="spacingAndGlyphs">mm</text>
<path d="M124.6,120H135.2" stroke="#d8d8d8" stroke-width="1"/><path d="M124.1,120l2.4,-1.6v3.2z M135.7,120l-2.4,-1.6v3.2z" fill="#d8d8d8"/>
<path d="M130.4,128.2V141.4M122.9,135.1H136.7" stroke="#8a8a8a" stroke-width="0.8"/>
<rect x="128.6" y="133.3" width="3.6" height="3.6" fill="#3daee9"/>
<path d="M130.6,135.2L130.6,141.6L132.2,140.2L133.4,142.6L134.4,142.1L133.3,139.7L135.4,139.6Z" fill="#d8d8d8"/>
<rect x="123.5" y="146.5" width="13.0" height="1" fill="#444"/>
<path d="M126.2,152.2V164.8L135.4,158.5Z" fill="none" stroke="#d8d8d8" stroke-width="1"/>
<path d="M124.2,155.2H126.2M124.2,161.8H126.2" stroke="#d8d8d8" stroke-width="1"/>
<circle cx="129.8" cy="154.4" r="0.9" fill="#e8405a"/><circle cx="129.8" cy="162.6" r="0.9" fill="#e8405a"/>
<path d="M128,156.6h1.6M128,160.4h1.6" stroke="#999" stroke-width="0.6"/>
<rect x="123.5" y="169.8" width="13.0" height="1" fill="#444"/>
<path d="M125,176.2V188M123.5,187.4H136" stroke="#d8d8d8" stroke-width="1"/>
<path d="M126.6,184.4L130.2,179.4L132,183L134.6,180.6" fill="none" stroke="#d8d8d8" stroke-width="0.9"/>
<rect x="121.8" y="192.7" width="16.3" height="15.600000000000001" fill="#0f1b2b" stroke="#2b4566" stroke-width="1"/>
<path d="M125,195V206.2M123.6,205.4H136" stroke="#d8d8d8" stroke-width="1"/><path d="M126,201.2H130V205" fill="none" stroke="#d8d8d8" stroke-width="0.8"/>
<path d="M125,213.2V225.1M123.5,224.4H136" stroke="#d8d8d8" stroke-width="1"/><path d="M126,223.6L134.8,215" stroke="#d8d8d8" stroke-width="1"/><path d="M126,220.4H128.6V224" fill="none" stroke="#d8d8d8" stroke-width="0.7"/>
<rect x="123.5" y="230.1" width="13.0" height="1" fill="#444"/>
<rect x="121.8" y="234.5" width="16.3" height="16.2" fill="#0f1b2b" stroke="#2b4566" stroke-width="1"/>
<rect x="123.6" y="236.2" width="12.4" height="5.3" fill="#e8e8e8"/><text x="129.8" y="240.9" font-size="5.4" fill="#333" text-anchor="middle" font-weight="bold" textLength="10" lengthAdjust="spacingAndGlyphs">R??</text>
<rect x="123.6" y="243.6" width="12.4" height="5.7" fill="#2f8fc4"/><text x="129.8" y="248.5" font-size="5.4" fill="#fff" text-anchor="middle" font-weight="bold" textLength="9.6" lengthAdjust="spacingAndGlyphs">R42</text>
<circle cx="129.8" cy="242.6" r="1" fill="#e8405a"/>
<rect x="123.5" y="254.1" width="13.0" height="1" fill="#444"/>
<rect x="121.8" y="258.0" width="16.3" height="15.899999999999999" fill="#0f1b2b" stroke="#2b4566" stroke-width="1"/>
<rect x="123.6" y="260" width="12.4" height="12.4" fill="#a8a8a8" stroke="#d8d8d8" stroke-width="0.8"/><rect x="126.4" y="262.4" width="7.8" height="7.6" fill="#3a3a3a"/><path d="M127,264.2H133.6M127,266.2H133.6M127,268.2H133.6" stroke="#8a8a8a" stroke-width="0.8"/>
<path d="M127.4,261.8Q125.4,266.2 127.4,270.6" fill="none" stroke="#3daee9" stroke-width="1.2"/>
<path d="M125.6,261.8H134.6M125.6,270.6H134.6" stroke="#cfcfcf" stroke-width="0.6"/>
<rect x="807.3" y="50" width="1" height="433" fill="#262626"/>
<rect x="810.4" y="53.9" width="15.5" height="15.399999999999999" fill="#0f1b2b" stroke="#2b4566" stroke-width="1"/>
<path d="M815.5,57.2V66.4L817.8,64.4L819.4,67.6L820.8,66.9L819.3,63.8L822.4,63.6Z" fill="#cfcfcf"/>
<path d="M811.5,76.2H815.6V84.5H823.8" fill="none" stroke="#e99aa8" stroke-width="1.1"/>
<path d="M819.6,73.2V86.3M821.8,73.2V86.3M817.8,78.6H824.8M817.8,81.6H824.8" stroke="#d8d8d8" stroke-width="0.8"/>
<path d="M811.5,76.2H815.6V80" fill="none" stroke="#d8d8d8" stroke-width="1"/>
<rect x="811.5" y="91.2" width="13.0" height="1" fill="#444"/>
<path d="M813.6,97.1V110.2L825.3,103.6Z" fill="none" stroke="#d8d8d8" stroke-width="1"/><path d="M811.4,100H813.6M811.4,107.2H813.6" stroke="#d8d8d8" stroke-width="1"/><path d="M816,101.8h1.6M816,105.4h1.6" stroke="#aaa" stroke-width="0.6"/>
<path d="M818.2,115.6V121M811.8,121H824.6M813.8,123.4H822.6M815.8,125.6H820.6" stroke="#d8d8d8" stroke-width="1"/>
<path d="M813,145.8L823.8,135" stroke="#d8d8d8" stroke-width="0.9"/>
<path d="M813,163.6L823,153.6" stroke="#3daee9" stroke-width="1.8"/>
<path d="M812,171.4H820M812,174.6H819M812,177.8H818" stroke="#d8d8d8" stroke-width="0.9"/><path d="M823.8,170.6V183.7" stroke="#d8d8d8" stroke-width="1.2"/>
<path d="M816,174.6L823,181M817,171.6L823,177" stroke="#3daee9" stroke-width="0.9"/>
<path d="M811.4,194.9H818.4" stroke="#d8d8d8" stroke-width="0.9"/><path d="M815.3,191.4L821.4,198.4M821.4,191.4L815.3,198.4" stroke="#3daee9" stroke-width="1.1"/>
<path d="M818.4,208.1V220.5M811.4,213.8H823.8" stroke="#d8d8d8" stroke-width="1"/><circle cx="818.4" cy="213.8" r="2.1" fill="#3daee9"/>
<text x="818.2" y="234.6" font-size="7.8" fill="#d8d8d8" text-anchor="middle">A</text><path d="M811.6,236.4H824.6" stroke="#d8d8d8" stroke-width="0.9"/>
<circle cx="813.8" cy="249" r="1.6" fill="none" stroke="#d8d8d8" stroke-width="0.8"/><path d="M813.8,250.6V254.6" stroke="#d8d8d8" stroke-width="0.8"/><text x="820.6" y="254.6" font-size="7.6" font-style="italic" fill="#d8d8d8" text-anchor="middle">A</text>
<path d="M811.6,264.8H820.6L824.2,269.2L820.6,273.6H811.6Z" fill="none" stroke="#d8d8d8" stroke-width="1"/><text x="816.2" y="271.8" font-size="7" fill="#d8d8d8" text-anchor="middle">A</text><circle cx="824.6" cy="269.2" r="0.7" fill="#3daee9"/>
<text x="815.2" y="290.6" font-size="7.4" fill="#d8d8d8" text-anchor="middle">A</text><path d="M819.8,287.4L822.2,285L824.6,287.4L822.2,289.8Z" fill="none" stroke="#d8d8d8" stroke-width="0.9"/>
<rect x="811.6" y="299.7" width="10.8" height="10" fill="#dccbc9" stroke="#d8d8d8" stroke-width="0.6"/><path d="M813,303.4l1.6,1.6l3,-3.4" fill="none" stroke="#333" stroke-width="0.8"/>
<circle cx="821.6" cy="308" r="3.4" fill="#e8405a"/><path d="M819.8,308H823.4M821.6,306.2V309.8" stroke="#fff" stroke-width="0.9"/>
<rect x="811.6" y="318.3" width="10.8" height="9.6" fill="#dccbc9" stroke="#d8d8d8" stroke-width="0.6"/><text x="816.6" y="324" font-size="5" fill="#333" text-anchor="middle">A/C</text>
<circle cx="821.6" cy="326.6" r="3.4" fill="#e8405a"/><path d="M821.6,324.6V328.4M820,327l1.6,1.6l1.6,-1.6" fill="none" stroke="#fff" stroke-width="0.9"/>
<rect x="811.5" y="336.3" width="13.0" height="1" fill="#444"/>
<path d="M813,343H823M818,343V353.5" stroke="#d8d8d8" stroke-width="2"/>
<rect x="814" y="362.3" width="8.8" height="8" fill="#9a9a9a" stroke="#d0d0d0" stroke-width="0.8"/><path d="M815.6,365H821.4M815.6,367.6H821.4" stroke="#d0d0d0" stroke-width="0.7"/>
<rect x="812.6" y="380.2" width="10.8" height="9.4" fill="#8a8a8a" stroke="#d6d6d6" stroke-width="1"/>
<circle cx="818" cy="403" r="5.2" fill="#8a8a8a" stroke="#d6d6d6" stroke-width="1"/>
<path d="M812.8,427.4A11,11 0 0 1 823.8,416.6" fill="none" stroke="#d8d8d8" stroke-width="1"/>
<path d="M813,435.6L817,434.2L823,436.4L822.6,443.6L813.4,445.6L817.2,440.6Z" fill="none" stroke="#d8d8d8" stroke-width="1" stroke-dasharray="1.2 1"/>
<rect x="812.2" y="452.2" width="12" height="12" rx="1.4" fill="#d6d6d6"/><path d="M813.6,462.6L817.4,457.2L820,460L821.4,458.6L823,462.6Z" fill="#555"/><circle cx="821.4" cy="455.4" r="1" fill="#555"/></svg>
<div id="sline" class="a"></div>
<div id="status" class="a">
 <span style="left:253.8px">Z 1.25</span>
 <span style="left:295px">X 147.3200&nbsp; Y 119.3800</span>
 <span style="left:385px">dx 147.3200&nbsp; dy 119.3800&nbsp; dist 189.6174</span>
 <span style="left:528.8px">grid 1.2700</span>
 <span style="left:633.6px">mm</span>
</div>
<div id="cbot" class="a"></div>
<div id="frame" class="a"></div>
</body></html>
